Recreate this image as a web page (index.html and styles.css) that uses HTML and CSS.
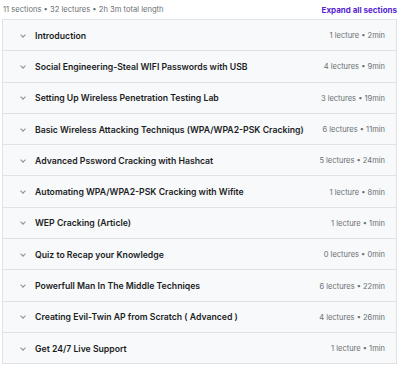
FILE: index.html
```html
<!DOCTYPE html>
<html lang="en">
<head>
    <meta charset="UTF-8">
    <title>Course content</title>
    <link rel="stylesheet" href="styles.css">
</head>
<body>
    <div class="summary">
        <span class="stats">11 sections • 32 lectures • 2h 3m total length</span>
        <span class="expand">Expand all sections</span>
    </div>
    <div class="sections">
        <div class="section"><span class="chev"></span><span class="title">Introduction</span><span class="meta">1 lecture • 2min</span></div>
        <div class="section"><span class="chev"></span><span class="title">Social Engineering-Steal WIFI Passwords with USB</span><span class="meta">4 lectures • 9min</span></div>
        <div class="section"><span class="chev"></span><span class="title">Setting Up Wireless Penetration Testing Lab</span><span class="meta">3 lectures • 19min</span></div>
        <div class="section"><span class="chev"></span><span class="title">Basic Wireless Attacking Techniqus (WPA/WPA2-PSK Cracking)</span><span class="meta">6 lectures • 11min</span></div>
        <div class="section"><span class="chev"></span><span class="title">Advanced Pssword Cracking with Hashcat</span><span class="meta">5 lectures • 24min</span></div>
        <div class="section"><span class="chev"></span><span class="title">Automating WPA/WPA2-PSK Cracking with Wifite</span><span class="meta">1 lecture • 8min</span></div>
        <div class="section"><span class="chev"></span><span class="title">WEP Cracking (Article)</span><span class="meta">1 lecture • 1min</span></div>
        <div class="section"><span class="chev"></span><span class="title">Quiz to Recap your Knowledge</span><span class="meta">0 lectures • 0min</span></div>
        <div class="section"><span class="chev"></span><span class="title">Powerfull Man In The Middle Techniqes</span><span class="meta">6 lectures • 22min</span></div>
        <div class="section"><span class="chev"></span><span class="title">Creating Evil-Twin AP from Scratch ( Advanced )</span><span class="meta">4 lectures • 26min</span></div>
        <div class="section"><span class="chev"></span><span class="title">Get 24/7 Live Support</span><span class="meta">1 lecture • 1min</span></div>
    </div>
</body>
</html>
```

FILE: styles.css
```css
body{
    margin: 0;
    padding: 0 3px 0 2px;
    background-color: #fff;
    font-family: Inter, "Noto Sans", sans-serif;
    color: #1c1d1f;
}
.summary{
    display: flex;
    justify-content: space-between;
    align-items: center;
    height: 19px;
    padding-left: 1px;
}
.stats{
    font-size: 7.6px;
    color: #6a6f73;
}
.expand{
    font-size: 8px;
    font-weight: 700;
    color: #5624d0;
}
.sections{
    border: 1px solid #e0e3e6;
    border-bottom: none;
}
.section{
    display: flex;
    align-items: center;
    height: 29.3px;
    padding: 1px 11px 0 17px;
    background-color: #f7f9fa;
    border-bottom: 1px solid #e0e3e6;
}
.chev{
    width: 3px;
    height: 3px;
    border-right: 1px solid #8a8f93;
    border-bottom: 1px solid #8a8f93;
    transform: rotate(45deg);
    margin: 0 10px 2px 1px;
}
.title{
    flex: 1;
    font-size: 8.7px;
    font-weight: 600;
}
.meta{
    font-size: 7.5px;
    color: #6a6f73;
}
```
